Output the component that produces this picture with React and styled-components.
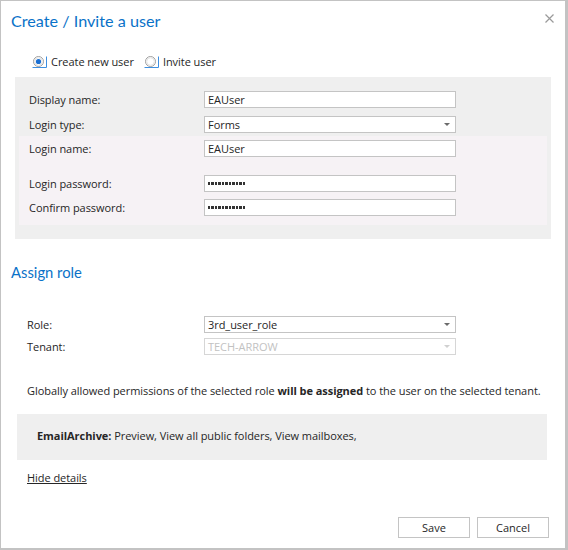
import React from 'react'
import styled, { createGlobalStyle } from 'styled-components'

const Global = createGlobalStyle`
  body { margin: 0; background: #fff; }
`

const Dialog = styled.div`
  width: 568px;
  height: 550px;
  box-sizing: border-box;
  border: 1px solid #c3c3c3;
  border-right-width: 3px;
  border-bottom-width: 2px;
  background: #fff;
  display: flex;
  flex-direction: column;
  font-family: "Open Sans", sans-serif;
  font-size: 11px;
  letter-spacing: -0.05px;
  color: #262626;
`

const Header = styled.div`
  display: flex;
  justify-content: space-between;
  align-items: flex-start;
  height: 32px;
  box-sizing: border-box;
  padding: 8px 11px 0 10px;
`

const Title = styled.h1`
  margin: 0;
  font-family: Lato, "Open Sans", sans-serif;
  font-size: 16.2px;
  font-weight: 400;
  line-height: 24px;
  letter-spacing: 0;
  color: #0a72c8;
`

const Close = styled.button`
  border: 0;
  background: none;
  padding: 0;
  margin-top: 5px;
  width: 9px;
  height: 9px;
  display: flex;
  cursor: pointer;
`

const RadioRow = styled.div`
  display: flex;
  align-items: center;
  gap: 10px;
  margin-top: 23px;
  padding-left: 31px;
  height: 12px;
`

const RadioLabel = styled.label`
  display: flex;
  align-items: center;
  gap: 4px;
  line-height: 12px;
`

const Panel = styled.div`
  margin: 9px 14px 0 14px;
  padding: 14px 4px;
  background: #efefef;
`

const SubPanel = styled.div`
  margin-top: 3px;
  padding: 4px 0 9px;
  background: #f6f2f5;
`

const Row = styled.div`
  display: flex;
  align-items: center;
  height: 17px;
  padding-left: ${p => p.$indent || 10}px;
  margin-top: ${p => p.$gap || 0}px;
`

const Label = styled.span`
  width: ${p => p.$width || 175}px;
  flex-shrink: 0;
`

const Field = styled.div`
  position: relative;
  width: 252px;
  height: 17px;
  box-sizing: border-box;
  border: 1px solid ${p => (p.$disabled ? '#d6d6d6' : '#c4c4c4')};
  background: #fff;
  padding-left: 3px;
  display: flex;
  align-items: center;
  color: ${p => (p.$disabled ? '#c2c2c2' : '#262626')};
  line-height: 15px;
`

const Arrow = styled.span`
  position: absolute;
  right: 5px;
  top: 6px;
  width: 0;
  height: 0;
  border-left: 3px solid transparent;
  border-right: 3px solid transparent;
  border-top: 3px solid ${p => (p.$disabled ? '#d0d0d0' : '#6b6b6b')};
`

const Mask = styled.span`
  width: 38px;
  height: 3px;
  background: repeating-linear-gradient(90deg, #333 0 2.5px, transparent 2.5px 3.5px);
`

const SectionTitle = styled.h2`
  margin: 21px 0 0 10px;
  font-family: Lato, "Open Sans", sans-serif;
  font-size: 14.8px;
  font-weight: 400;
  line-height: 24px;
  letter-spacing: 0;
  color: #0a72c8;
`

const RoleBlock = styled.div`
  margin-top: 32px;
`

const Info = styled.p`
  margin: 28px 0 0 26px;
  line-height: 16px;
`

const Details = styled.div`
  margin: 15px 18px 0 16px;
  height: 46px;
  box-sizing: border-box;
  padding: 0 0 3px 20px;
  background: #efefef;
  display: flex;
  align-items: center;
`

const Link = styled.a`
  margin: 10px 0 0 26px;
  line-height: 16px;
  color: #262626;
  text-decoration: underline;
  align-self: flex-start;
`

const Footer = styled.div`
  margin-top: auto;
  display: flex;
  justify-content: flex-end;
  gap: 7px;
  padding: 0 16px 10px 0;
`

const Button = styled.button`
  width: 72px;
  height: 21px;
  border: 1px solid #c4c4c4;
  background: #fff;
  font-family: inherit;
  font-size: 11px;
  color: #262626;
  padding: 0;
`

const Radio = ({ checked }) => (
  <svg width="15" height="12" viewBox="0 0 15 12">
    <circle cx="6.5" cy="5.5" r="5" fill="#fff" stroke="#9e9e9e" />
    <circle cx="6.5" cy="5.5" r="3.8" fill="none" stroke="#e4e4e4" />
    {checked && <circle cx="6.5" cy="5.5" r="2.6" fill="#1a6fd3" />}
    <path d="M0.5 11.5H14.5V0.5" fill="none" stroke="#3d8ee0" />
  </svg>
)

const CloseIcon = () => (
  <svg width="9" height="9" viewBox="0 0 9 9">
    <path d="M0.5 0.5L8.5 8.5M8.5 0.5L0.5 8.5" stroke="#9a9a9a" strokeWidth="1.2" />
  </svg>
)

const Select = ({ value, disabled }) => (
  <Field $disabled={disabled}>
    {value}
    <Arrow $disabled={disabled} />
  </Field>
)

export default function App() {
  return (
    <>
      <Global />
      <Dialog>
        <Header>
          <Title>Create / Invite a user</Title>
          <Close aria-label="Close"><CloseIcon /></Close>
        </Header>

        <RadioRow>
          <RadioLabel><Radio checked />Create new user</RadioLabel>
          <RadioLabel><Radio />Invite user</RadioLabel>
        </RadioRow>

        <Panel>
          <Row><Label>Display name:</Label><Field>EAUser</Field></Row>
          <Row $gap={8}><Label>Login type:</Label><Select value="Forms" /></Row>
          <SubPanel>
            <Row><Label>Login name:</Label><Field>EAUser</Field></Row>
            <Row $gap={18}><Label>Login password:</Label><Field><Mask /></Field></Row>
            <Row $gap={7}><Label>Confirm password:</Label><Field><Mask /></Field></Row>
          </SubPanel>
        </Panel>

        <SectionTitle>Assign role</SectionTitle>

        <RoleBlock>
          <Row $indent={26}><Label $width={177}>Role:</Label><Select value="3rd_user_role" /></Row>
          <Row $indent={26} $gap={5}><Label $width={177}>Tenant:</Label><Select value="TECH-ARROW" disabled /></Row>
        </RoleBlock>

        <Info>
          Globally allowed permissions of the selected role <b>will be assigned</b> to the user on the selected tenant.
        </Info>

        <Details>
          <span><b>EmailArchive:</b> Preview, View all public folders, View mailboxes,</span>
        </Details>

        <Link href="#">Hide details</Link>

        <Footer>
          <Button>Save</Button>
          <Button>Cancel</Button>
        </Footer>
      </Dialog>
    </>
  )
}
